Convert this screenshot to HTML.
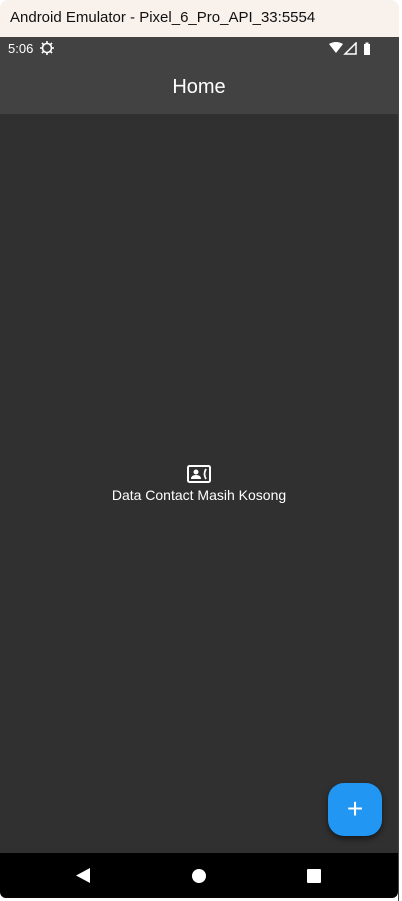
<!DOCTYPE html>
<html><head><style>
body{margin:0;width:402px;height:901px;background:#fff;position:relative;overflow:hidden;font-family:"Liberation Sans",sans-serif}
.t{position:absolute;left:0;top:0;width:399px;height:37px;background:#f8f1ec;border-radius:8px 8px 0 0}
.t span{position:absolute;left:10px;top:9px;font-size:15px;color:#111}
.sb{position:absolute;left:0;top:37px;width:398px;height:24px;background:#424242;color:#fff;font-size:13px}
.ab{position:absolute;left:0;top:61px;width:398px;height:53px;background:#424242;color:#fff;font-size:20px;text-align:center;line-height:52px}
.bd{position:absolute;left:0;top:114px;width:398px;height:739px;background:#303030}
.nv{position:absolute;left:0;top:853px;width:398px;height:45px;background:#000;border-radius:0 0 6px 6px}
.edge{position:absolute;left:398px;top:37px;width:4px;height:864px;background:#fff;border-left:1px solid #444}
.fab{position:absolute;left:328px;top:783px;width:54px;height:53px;background:#2196f3;border-radius:16px;box-shadow:0 3px 6px rgba(0,0,0,.5);color:#fff;font-size:28px;text-align:center;line-height:52px}
</style></head><body>
<div class="t"><span>Android Emulator - Pixel_6_Pro_API_33:5554</span></div>
<div class="sb"><span style="position:absolute;left:8px;top:4px">5:06</span>
<svg style="position:absolute;left:40px;top:4px" width="14" height="14" viewBox="0 0 14 14"><circle cx="7" cy="7" r="4.5" fill="none" stroke="#fff" stroke-width="1.6"/><path d="M7 0v3M7 11v3M0 7h3M11 7h3M2 2l2 2M10 10l2 2M12 2l-2 2M4 10l-2 2" stroke="#fff" stroke-width="1.6"/></svg>
<svg style="position:absolute;left:329px;top:5px" width="44" height="13" viewBox="0 0 44 13"><path d="M0 2 Q7 -2 14 2 L7 11Z" fill="#fff"/><path d="M27 1V12H16Z" fill="none" stroke="#fff" stroke-width="1.5"/><rect x="35" y="2" width="6" height="11" fill="#fff"/><rect x="36.5" y="0.5" width="3" height="2" fill="#fff"/></svg></div>
<div class="ab">Home</div>
<div class="bd"></div>
<svg style="position:absolute;left:187px;top:465px" width="24" height="18" viewBox="0 0 24 18"><rect x="1" y="1" width="22" height="16" rx="1.5" fill="none" stroke="#fff" stroke-width="2"/><circle cx="9" cy="7" r="2.5" fill="#fff"/><path d="M4 14q0-4 5-4t5 4z" fill="#fff"/><path d="M19 4q-3 5 0 10" fill="none" stroke="#fff" stroke-width="1.8"/></svg>
<div style="position:absolute;left:0;width:398px;top:487px;text-align:center;color:#fff;font-size:14px">Data Contact Masih Kosong</div>
<div class="fab">+</div>
<div class="nv">
<svg style="position:absolute;left:76px;top:15px" width="14" height="15"><path d="M14 0V15L0 7.5Z" fill="#fff"/></svg>
<div style="position:absolute;left:192px;top:16px;width:14px;height:14px;border-radius:50%;background:#fff"></div>
<div style="position:absolute;left:307px;top:16px;width:14px;height:14px;background:#fff;border-radius:1px"></div>
</div>
<div class="edge"></div>
</body></html>
